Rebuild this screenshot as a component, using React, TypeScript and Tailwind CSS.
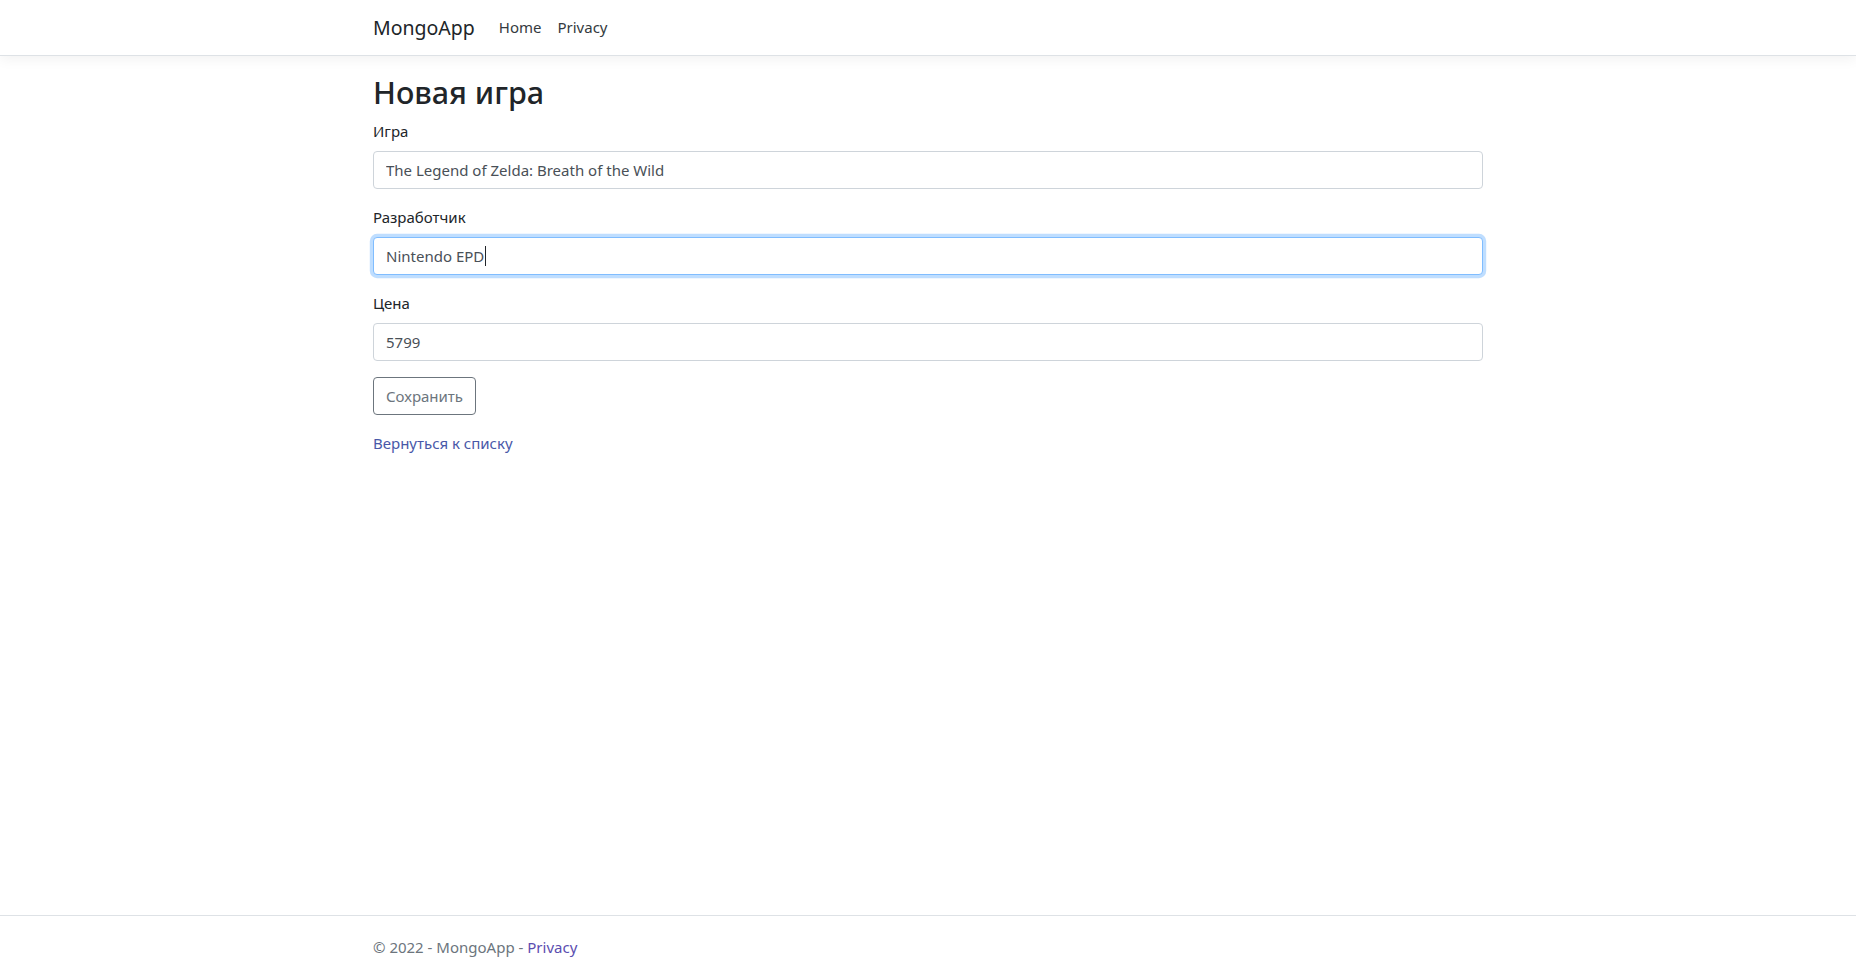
import React from 'react'

const font = { fontFamily: '"Noto Sans", "Open Sans", sans-serif' }

function Field({ label, value, focused }: { label: string; value: string; focused?: boolean }) {
  return (
    <div className="mb-4">
      <label className="block mb-2 text-[15px] leading-6 text-[#212529]">{label}</label>
      <div className="relative">
        <input
          readOnly
          value={value}
          className={
            focused
              ? 'block w-full h-[38px] px-3 text-[15px] text-[#495057] bg-white border border-[#80bdff] rounded outline-none shadow-[0_0_0_3.2px_rgba(0,123,255,0.25)]'
              : 'block w-full h-[38px] px-3 text-[15px] text-[#495057] bg-white border border-[#ced4da] rounded outline-none'
          }
        />
        {focused && <span className="absolute left-[112px] top-[9px] w-px h-5 bg-[#212529]" />}
      </div>
    </div>
  )
}

export default function App() {
  return (
    <div className="min-h-screen flex flex-col bg-white text-[#212529]" style={font}>
      <header className="h-[56px] border-b border-[#dee2e6] bg-white shadow-[0_4px_12px_rgba(0,0,0,0.05)] mb-[17px]">
        <nav className="max-w-[1140px] mx-auto px-[15px] h-full flex items-center">
          <span className="text-[19.5px] leading-[30px] text-[#212529] mr-4">MongoApp</span>
          <a className="px-2 text-[15px] text-[#343a40]">Home</a>
          <a className="px-2 text-[15px] text-[#343a40]">Privacy</a>
        </nav>
      </header>

      <main className="w-full max-w-[1140px] mx-auto px-[15px]">
        <h1 className="text-[30.5px] leading-[38px] font-medium mb-2 text-[#212529]">Новая игра</h1>
        <form>
          <Field label="Игра" value="The Legend of Zelda: Breath of the Wild" />
          <Field label="Разработчик" value="Nintendo EPD" focused />
          <Field label="Цена" value="5799" />
          <button
            type="button"
            className="h-[38px] px-3 text-[15px] text-[#6c757d] bg-white border border-[#6c757d] rounded"
          >
            Сохранить
          </button>
        </form>
        <div className="mt-4">
          <a className="text-[15px] leading-6 text-[#4858a8]">Вернуться к списку</a>
        </div>
      </main>

      <footer className="mt-auto border-t border-[#dee2e6] h-[61px] pt-px leading-[60px] text-[#6c757d]">
        <div className="max-w-[1140px] mx-auto px-[15px] text-[15px]">
          © 2022 - MongoApp - <a className="text-[#5b4db0]">Privacy</a>
        </div>
      </footer>
    </div>
  )
}
